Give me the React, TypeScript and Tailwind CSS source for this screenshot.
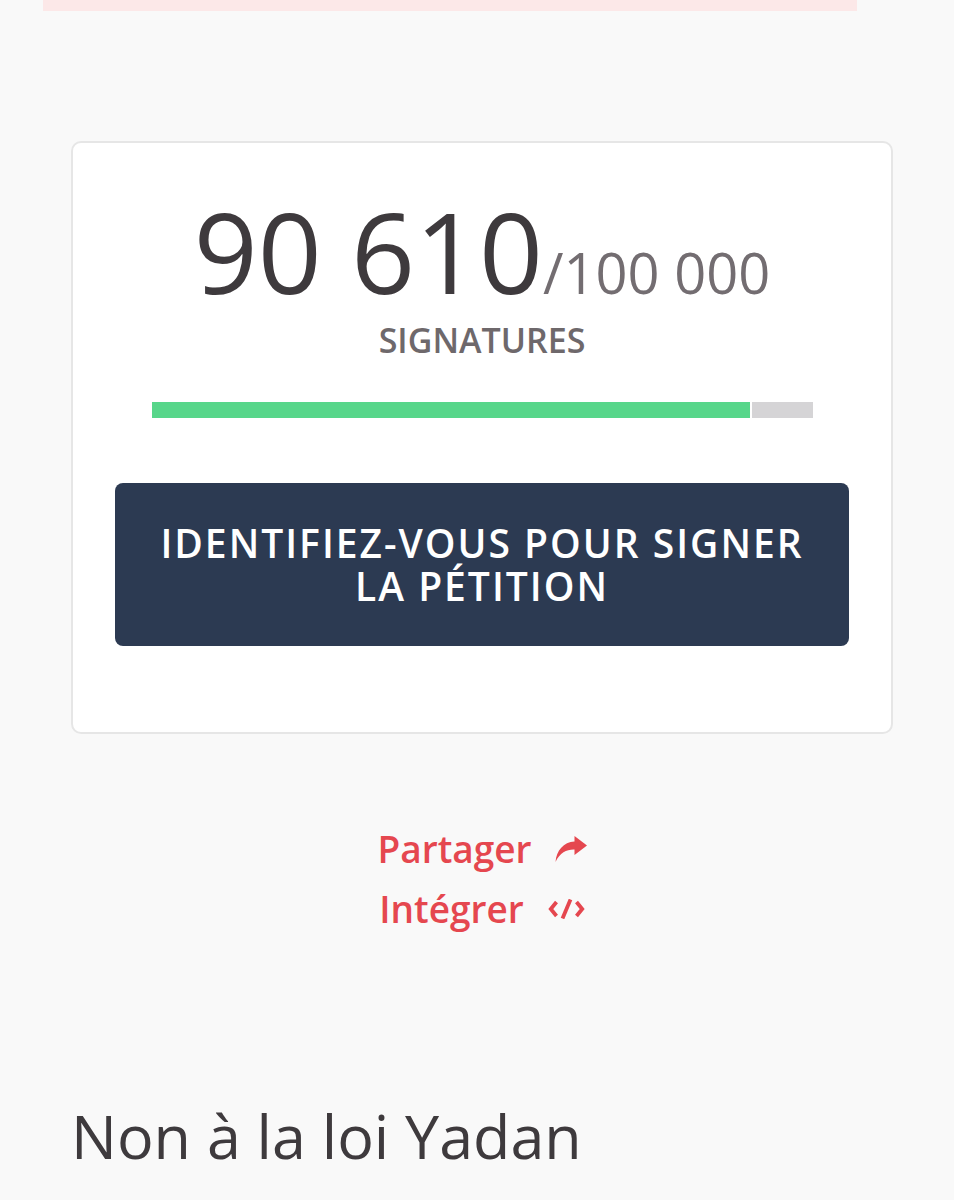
const ShareIcon = () => (
  <svg width="32" height="26" viewBox="0 0 32 26" fill="currentColor" aria-hidden="true">
    <path d="M19.5 0 L32 9.5 L19.5 19 L19.5 13.5 C12 13.2 5 16.5 0.5 26 C1.5 14.5 8.5 6 19.5 5.5 Z" />
  </svg>
);

const CodeIcon = () => (
  <svg width="37" height="20" viewBox="0 0 37 20" fill="none" stroke="currentColor" strokeWidth="3.8" aria-hidden="true">
    <polyline points="8.5,3 2.8,10 8.5,17" strokeLinejoin="miter" />
    <line x1="22.5" y1="0.5" x2="14.5" y2="19.5" />
    <polyline points="28.5,3 34.2,10 28.5,17" strokeLinejoin="miter" />
  </svg>
);

export default function App() {
  const count = 90610;
  const goal = 100000;
  const pct = (count / goal) * 100;

  return (
    <div className="min-h-screen bg-[#f9f9f9] font-['Open_Sans',sans-serif] text-[#3e3a3d]">
      <div className="ml-[43px] w-[814px] h-[11px] bg-[#fce8e8]" />

      <div className="ml-[71px] mt-[130px] w-[822px] bg-white border-2 border-[#e6e6e6] rounded-[10px] pt-[52px] pb-[86px]">
        <div className="flex items-baseline justify-center leading-none">
          <span className="text-[112px] text-[#3e3a3d]">90 610</span>
          <span className="text-[56px] text-[#736d71]">/100 000</span>
        </div>
        <div className="mt-[16px] text-center text-[34px] leading-none font-semibold text-[#6e686b]">
          SIGNATURES
        </div>

        <div className="mx-auto mt-[45px] w-[661px] h-[16px] flex gap-[2px]">
          <div className="h-full bg-[#57d68a]" style={{ width: `${pct}%` }} />
          <div className="h-full flex-1 bg-[#d5d4d6]" />
        </div>

        <button className="mt-[65px] mx-[42px] w-[734px] block rounded-[8px] bg-[#2c3a52] px-[40px] pt-[38px] pb-[39px] text-center text-[39px] leading-[43px] font-semibold tracking-[2px] text-white">
          IDENTIFIEZ-VOUS POUR SIGNER LA PÉTITION
        </button>
      </div>

      <div className="ml-[71px] mt-[85px] w-[822px] flex flex-col items-center text-[37px] leading-[60px] font-semibold text-[#e5474f]">
        <a className="flex items-center gap-[23px]">
          <span>Partager</span>
          <ShareIcon />
        </a>
        <a className="flex items-center gap-[24px]">
          <span>Intégrer</span>
          <CodeIcon />
        </a>
      </div>

      <h1 className="ml-[71px] mt-[160px] text-[61px] leading-[1.22] font-normal text-[#3e3a3d]">
        Non à la loi Yadan
      </h1>
    </div>
  );
}
